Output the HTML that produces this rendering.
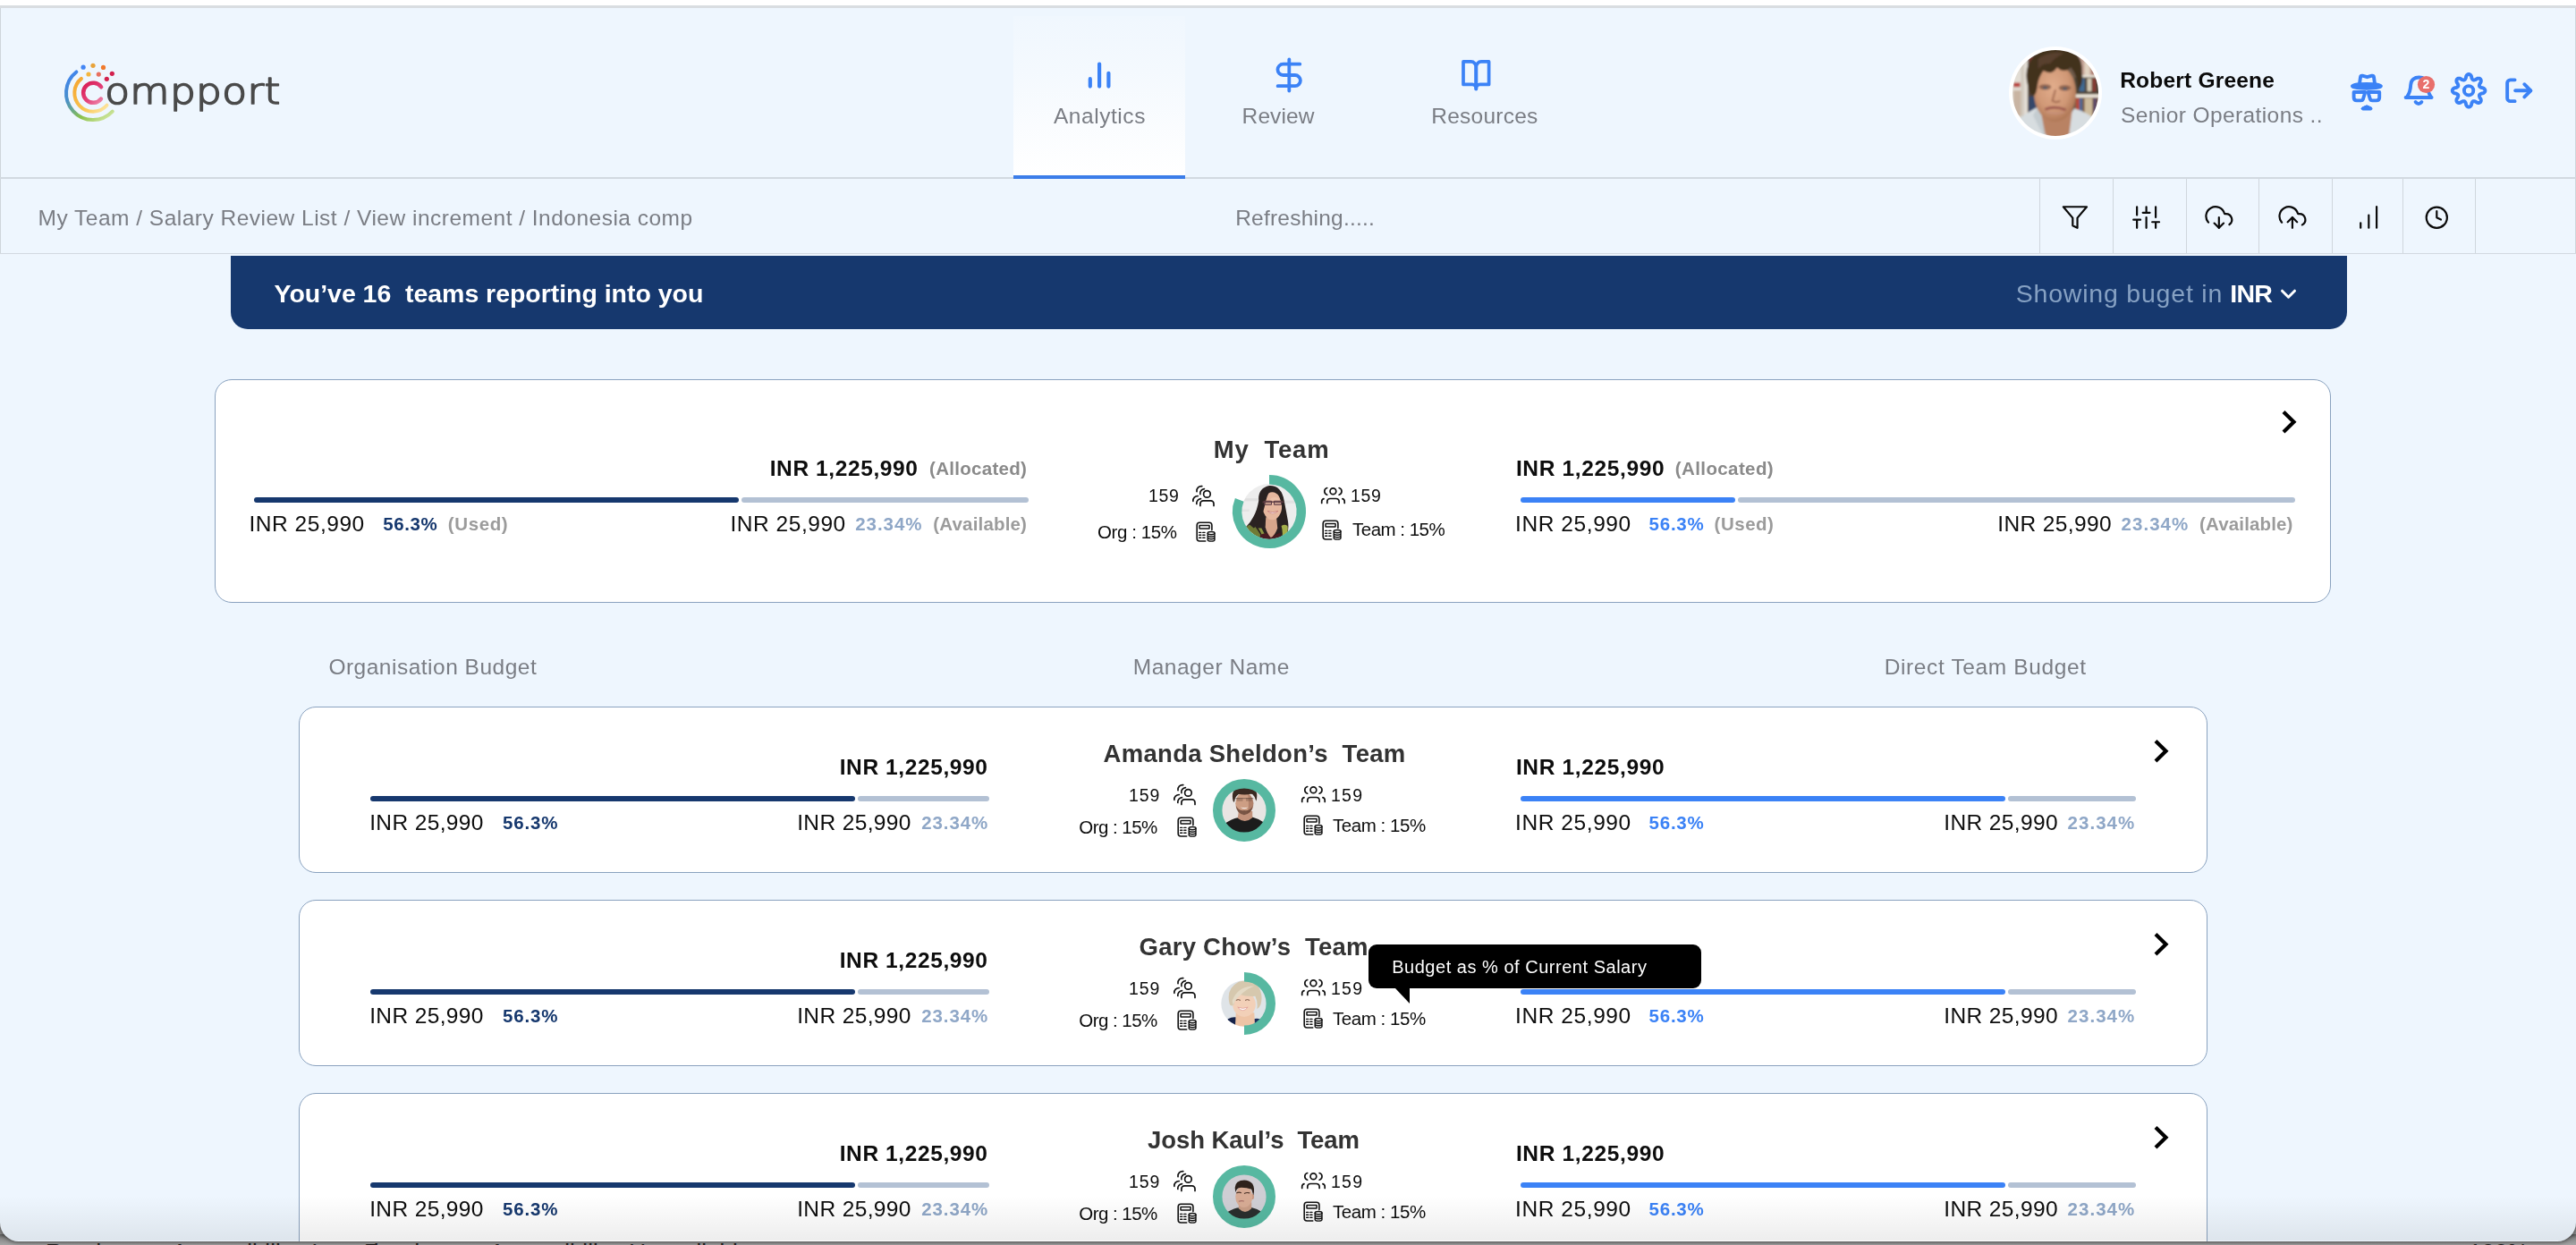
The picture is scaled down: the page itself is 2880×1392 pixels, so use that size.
<!DOCTYPE html>
<html lang="en">
<head>
<meta charset="utf-8">
<title>Compport – Salary Review – Indonesia comp</title>
<style>
html,body{margin:0;padding:0;}
body{width:2880px;height:1392px;overflow:hidden;background:#8d8d8d;font-family:"Liberation Sans",Arial,sans-serif;}
#desk{position:absolute;left:0;top:1380px;width:2880px;height:12px;background:linear-gradient(#5a5a5a,#8a8a8a 40%,#a6a6a6);overflow:hidden;}
#desk span{position:absolute;top:7px;font-size:26px;line-height:26px;color:#222;white-space:nowrap;}
#win{will-change:transform;position:absolute;left:0;top:0;width:2880px;height:1388px;background:#eef6fe;border-radius:0 0 21px 21px;overflow:hidden;box-shadow:0 1px 5px rgba(0,0,0,.55);}
.abs{position:absolute;}
.tx{position:absolute;white-space:pre;margin:0;padding:0;}
#chrome-top{position:absolute;left:0;top:0;width:2880px;height:6px;background:#fff;}
#chrome-line{position:absolute;left:0;top:6px;width:2880px;height:3px;background:#d9dde1;}
#edge-l{position:absolute;left:0;top:9px;width:1px;height:274px;background:#cfd5db;}
#edge-r{position:absolute;left:2879px;top:9px;width:1px;height:274px;background:#cfd5db;}
#hdr-border{position:absolute;left:0;top:198px;width:2880px;height:2px;background:#d2d9e0;}
#sub-border{position:absolute;left:0;top:283px;width:2880px;height:1px;background:#d2d9e0;}
#tab-active{position:absolute;left:1133px;top:18px;width:192px;height:178px;background:linear-gradient(180deg,#f0f7fe 0%,#f4f9fe 35%,#ffffff 100%);}
#tab-line{position:absolute;left:1133px;top:196px;width:192px;height:4px;background:#3b7de9;}
.vdiv{position:absolute;top:200px;width:1px;height:83px;background:#cfd6dd;}
#banner{position:absolute;left:258px;top:286px;width:2366px;height:82px;background:#16386e;border-radius:0 0 19px 19px;}
.card{position:absolute;background:#fff;border:1px solid #8aa2bf;border-radius:19px;box-sizing:border-box;}
.bar{position:absolute;height:6px;border-radius:3px;}
.bar.dark{background:#16386e;}
.bar.blue{background:#3b82f6;}
.bar.light{background:#b3c1d4;}
#tip{position:absolute;left:1530px;top:1056px;width:372px;height:49px;background:#000;border-radius:9px;}
#tip-arrow{position:absolute;left:1560px;top:1105px;width:0;height:0;border-top:17px solid #000;border-left:16px solid transparent;}
#fade{position:absolute;left:0;top:1337px;width:2880px;height:50px;background:linear-gradient(rgba(0,0,0,0),rgba(0,0,0,.07));pointer-events:none;}
svg{position:absolute;overflow:visible;}
</style>
</head>
<body>
<div id="desk"><span style="left:51px">Ready</span><span style="left:160px">&#9786; Accessibility: Investigate</span><span style="left:407px">Ready</span><span style="left:515px">&#9786; Accessibility: Unavailable</span><span style="left:2230px">&#9635; &#9636;</span><span style="left:2760px">100%</span></div>
<div id="win">
<div id="chrome-top"></div><div id="chrome-line"></div><div id="edge-l"></div><div id="edge-r"></div>
<header>
<div id="tab-active"></div>
<svg style="left:0px;top:0px" width="340" height="200" viewBox="0 0 340 200" ><title>compport</title><defs><linearGradient id="lg1" gradientUnits="userSpaceOnUse" x1="80" y1="78" x2="122" y2="134"><stop offset="0" stop-color="#3f83f1"/><stop offset=".35" stop-color="#4a90c8"/><stop offset=".7" stop-color="#8bc24a"/><stop offset="1" stop-color="#d6e9a6"/></linearGradient><linearGradient id="lg2" gradientUnits="userSpaceOnUse" x1="84" y1="90" x2="120" y2="122"><stop offset="0" stop-color="#f5a733"/><stop offset=".6" stop-color="#f9c652"/><stop offset="1" stop-color="#fde6a4"/></linearGradient><linearGradient id="lg3" gradientUnits="userSpaceOnUse" x1="94" y1="92" x2="114" y2="116"><stop offset="0" stop-color="#d81b55"/><stop offset=".6" stop-color="#e4457c"/><stop offset="1" stop-color="#f08fb0"/></linearGradient></defs><path d="M85.37,80.49 A30,30 0 1 0 125.80,124.61" fill="none" stroke="url(#lg1)" stroke-width="4" stroke-linecap="round"/><path d="M90.97,87.91 A20.7,20.7 0 1 0 119.50,117.72" fill="none" stroke="url(#lg2)" stroke-width="4" stroke-linecap="round"/><path d="M113.14,97.30 A11.05,11.05 0 1 0 112.94,110.56" fill="none" stroke="url(#lg3)" stroke-width="4.5" stroke-linecap="round"/><circle cx="93.1" cy="75.2" r="2.6" fill="#4285f4"/><circle cx="104" cy="73.3" r="2.6" fill="#e8a33a"/><circle cx="115.5" cy="75.4" r="2.6" fill="#f07a2c"/><circle cx="99" cy="83" r="2.6" fill="#f4b63e"/><circle cx="110.3" cy="83.1" r="2.6" fill="#e8705f"/><circle cx="125.3" cy="82.3" r="2.6" fill="#d2214e"/><circle cx="119.3" cy="88.3" r="2.6" fill="#d2214e"/><text transform="translate(117.2,116.2) scale(1.12,1)" x="0" y="0" font-family="'DejaVu Sans Light','DejaVu Sans','Liberation Sans',sans-serif" font-weight="200" font-size="40.5" fill="#4a4a4a" stroke="#4a4a4a" stroke-width="1.7" stroke-linejoin="round" stroke-linecap="round" textLength="175" lengthAdjust="spacing">ompport</text></svg>
<svg style="left:1200px;top:50px" width="500" height="70" viewBox="1200 50 500 70" ><g fill="none" stroke="#3b82f6" stroke-linecap="round" stroke-linejoin="round"><path stroke-width="4.2" d="M1218.8,88.2V96.6M1229.1,71.6V96.6M1239.4,81.8V96.6"/><path stroke-width="3.8" d="M1441.3,66.5V101.5"/><path stroke-width="3.8" d="M1453.3,71.7H1434.6a6.15,6.15 0 0 0 0,12.3h13.2a6.1,6.1 0 0 1 0,12.2H1428.6"/><path stroke-width="3.7" d="M1636,68.9H1644.6a5.7,6.3 0 0 1 5.7,6.3V99.4a4.3,5 0 0 0-4.3,-5H1636Z"/><path stroke-width="3.7" d="M1664.6,68.9H1656a5.7,6.3 0 0 0-5.7,6.3V99.4a4.3,5 0 0 1 4.3,-5H1664.6Z"/></g></svg>
<div class="abs" style="left:2246px;top:52px;width:104px;height:104px;border-radius:50%;background:#fff;"></div>
<svg style="left:2246px;top:52px" width="104" height="104" viewBox="0 0 104 104" ><defs><clipPath id="c1"><circle cx="52" cy="52" r="48"/></clipPath><filter id="b1" x="-20%" y="-20%" width="140%" height="140%"><feGaussianBlur stdDeviation="0.885"/></filter></defs><g clip-path="url(#c1)"><g filter="url(#b1)" transform="translate(4,4) scale(0.96)"><defs><radialGradient id="rgf" cx="0.45" cy="0.4" r="0.65"><stop offset="0" stop-color="#e2ad8c"/><stop offset=".6" stop-color="#d09876"/><stop offset="1" stop-color="#a8704f"/></radialGradient></defs><rect x="-10" y="-10" width="120" height="120" fill="#6e5a4a"/><rect x="-10" y="-10" width="28" height="120" fill="#e2ddd4"/><rect x="1" y="38" width="8" height="5" fill="#b8423c"/><rect x="1" y="47" width="9" height="30" fill="#c9b4a2"/><rect x="10" y="-10" width="3" height="120" fill="#cfc8bc"/><rect x="18" y="-10" width="10" height="120" fill="#4e4038"/><rect x="19" y="54" width="9" height="28" fill="#34466a"/><rect x="19" y="8" width="8" height="30" fill="#7a3a30"/><rect x="76" y="6" width="36" height="23" fill="#c7a698"/><rect x="84" y="6" width="6" height="23" fill="#e2d4c2"/><rect x="92" y="6" width="5" height="23" fill="#a8746a"/><rect x="79" y="29" width="33" height="3" fill="#ece6da"/><rect x="72" y="32" width="40" height="19" fill="#4e4438"/><rect x="78" y="33" width="6" height="15" fill="#3f6a94"/><rect x="87" y="33" width="5" height="15" fill="#d8cdb8"/><rect x="93" y="33" width="4" height="15" fill="#8a3a30"/><rect x="72" y="51.5" width="40" height="4" fill="#ece6da"/><rect x="72" y="55.5" width="40" height="26" fill="#7e5e48"/><rect x="74" y="56" width="4" height="24" fill="#b84a3a"/><rect x="78" y="56" width="3" height="24" fill="#3a6aa0"/><rect x="84" y="56" width="9" height="24" fill="#cdbb9c"/><rect x="94" y="56" width="4" height="24" fill="#5a4a6a"/><path d="M2,84 Q18,72 30,66 L42,86 L60,86 L72,68 Q86,72 98,82 L104,112 L-4,112Z" fill="#d7dde0"/><path d="M30,66 L42,86 L36,100 L24,76Z" fill="#c4ccd0"/><path d="M32,66 L70,66 L66,98 Q52,110 38,98Z" fill="#b98264"/><ellipse cx="49.5" cy="50" rx="24.5" ry="33.5" fill="url(#rgf)"/><ellipse cx="38" cy="43" rx="7" ry="3.2" fill="#7a5240" opacity=".75"/><ellipse cx="61" cy="44" rx="7" ry="3.2" fill="#7a5240" opacity=".75"/><ellipse cx="38" cy="44" rx="2.6" ry="1.6" fill="#4a5a6a"/><ellipse cx="61" cy="45" rx="2.6" ry="1.6" fill="#4a5a6a"/><path d="M50,46 L46.5,59 q4.5,3 9,0" stroke="#9a624a" stroke-width="2.2" fill="none" opacity=".8"/><path d="M38,69 q11,-4.5 24,0.5" stroke="#9a544e" stroke-width="2.8" fill="none"/><path d="M40,72 q10,3 20,0.5" stroke="#c89280" stroke-width="2" fill="none" opacity=".8"/><path d="M21,50 Q10,24 24,8 Q40,-8 62,-2 Q82,2 81,26 Q83,40 76,47 Q77,32 68,20 Q60,28 52,20 Q46,30 36,24 Q30,32 29,42 Q28,50 26,52 Q23,54 21,50Z" fill="#43301f"/><path d="M30,10 Q44,0 60,4 Q50,8 44,16 Q36,14 30,22Z" fill="#5c4430" opacity=".9"/></g></g></svg>
<svg style="left:2620px;top:60px" width="240" height="80" viewBox="0 0 240 80" ><g fill="none" stroke="#3b82f6" stroke-width="3.9" stroke-linecap="round" stroke-linejoin="round"><ellipse cx="25.9" cy="36.3" rx="16" ry="2.4" fill="#3b82f6"/><path d="M18,33.5 L19,26.2 Q19.3,24.2 21.2,24.7 L26.5,26.2 L31.8,24.7 Q33.7,24.2 34,26.2 L35,33.5"/><path d="M11.6,43 L24.3,43 L21.9,51 Q21.3,52.4 19.6,52.4 L15,52.4 Q11.6,52.4 11.6,49 Z"/><path d="M40.2,43 L27.5,43 L29.9,51 Q30.5,52.4 32.2,52.4 L36.8,52.4 Q40.2,52.4 40.2,49 Z"/><path d="M20.2,61.6 Q20.2,59.6 22.6,59.3 Q26.1,56.4 29.6,59.3 Q32,59.6 32,61.6 Q32,63 30.5,63 H21.7 Q20.2,63 20.2,61.6 Z" fill="#3b82f6" stroke-width="1"/><path d="M69.6,49 H98.6"/><path d="M71.2,48 C74,44 75,40 75.2,35 C75.5,29 79.5,26.5 84.5,26.5 C89.5,26.5 93.5,29 93.8,35 C94,40 95,44 97.6,48"/><path d="M80.6,54 Q84,58.2 87.4,54"/><path d="M191.6,29.35 H186.65 a3.5,3.5 0 0 0 -3.5,3.5 V49.65 a3.5,3.5 0 0 0 3.5,3.5 H191.6"/><path d="M192.2,41.3 H209"/><path d="M202.3,34.2 L209.4,41.3 L202.3,48.4"/><circle cx="140.1" cy="41.3" r="5.2"/><path d="M158.40,41.30 L158.38,41.62 L158.32,41.94 L158.21,42.25 L158.06,42.56 L157.87,42.85 L157.64,43.14 L157.37,43.42 L157.05,43.68 L156.68,43.93 L156.24,44.15 L155.67,44.33 L154.82,44.43 L154.33,44.58 L153.92,44.75 L153.56,44.91 L153.25,45.07 L152.97,45.23 L152.72,45.40 L152.51,45.57 L152.33,45.75 L152.18,45.94 L152.06,46.13 L151.98,46.34 L151.92,46.56 L151.90,46.80 L151.90,47.05 L151.93,47.33 L151.98,47.62 L152.06,47.93 L152.17,48.27 L152.31,48.64 L152.48,49.04 L152.72,49.49 L153.25,50.17 L153.53,50.70 L153.68,51.17 L153.77,51.60 L153.81,52.01 L153.81,52.40 L153.77,52.77 L153.69,53.11 L153.58,53.43 L153.43,53.73 L153.25,54.00 L153.04,54.24 L152.80,54.45 L152.53,54.63 L152.23,54.78 L151.91,54.89 L151.57,54.97 L151.20,55.01 L150.81,55.01 L150.40,54.97 L149.97,54.88 L149.50,54.73 L148.97,54.45 L148.29,53.92 L147.84,53.68 L147.44,53.51 L147.07,53.37 L146.73,53.26 L146.42,53.18 L146.13,53.13 L145.85,53.10 L145.60,53.10 L145.36,53.12 L145.14,53.18 L144.93,53.26 L144.74,53.38 L144.55,53.53 L144.37,53.71 L144.20,53.92 L144.03,54.17 L143.87,54.45 L143.71,54.76 L143.55,55.12 L143.38,55.53 L143.23,56.02 L143.13,56.87 L142.95,57.44 L142.73,57.88 L142.48,58.25 L142.22,58.57 L141.94,58.84 L141.65,59.07 L141.36,59.26 L141.05,59.41 L140.74,59.52 L140.42,59.58 L140.10,59.60 L139.78,59.58 L139.46,59.52 L139.15,59.41 L138.84,59.26 L138.55,59.07 L138.26,58.84 L137.98,58.57 L137.72,58.25 L137.47,57.88 L137.25,57.44 L137.07,56.87 L136.97,56.02 L136.82,55.53 L136.65,55.12 L136.49,54.76 L136.33,54.45 L136.17,54.17 L136.00,53.92 L135.83,53.71 L135.65,53.53 L135.46,53.38 L135.27,53.26 L135.06,53.18 L134.84,53.12 L134.60,53.10 L134.35,53.10 L134.07,53.13 L133.78,53.18 L133.47,53.26 L133.13,53.37 L132.76,53.51 L132.36,53.68 L131.91,53.92 L131.23,54.45 L130.70,54.73 L130.23,54.88 L129.80,54.97 L129.39,55.01 L129.00,55.01 L128.63,54.97 L128.29,54.89 L127.97,54.78 L127.67,54.63 L127.40,54.45 L127.16,54.24 L126.95,54.00 L126.77,53.73 L126.62,53.43 L126.51,53.11 L126.43,52.77 L126.39,52.40 L126.39,52.01 L126.43,51.60 L126.52,51.17 L126.67,50.70 L126.95,50.17 L127.48,49.49 L127.72,49.04 L127.89,48.64 L128.03,48.27 L128.14,47.93 L128.22,47.62 L128.27,47.33 L128.30,47.05 L128.30,46.80 L128.28,46.56 L128.22,46.34 L128.14,46.13 L128.02,45.94 L127.87,45.75 L127.69,45.57 L127.48,45.40 L127.23,45.23 L126.95,45.07 L126.64,44.91 L126.28,44.75 L125.87,44.58 L125.38,44.43 L124.53,44.33 L123.96,44.15 L123.52,43.93 L123.15,43.68 L122.83,43.42 L122.56,43.14 L122.33,42.85 L122.14,42.56 L121.99,42.25 L121.88,41.94 L121.82,41.62 L121.80,41.30 L121.82,40.98 L121.88,40.66 L121.99,40.35 L122.14,40.04 L122.33,39.75 L122.56,39.46 L122.83,39.18 L123.15,38.92 L123.52,38.67 L123.96,38.45 L124.53,38.27 L125.38,38.17 L125.87,38.02 L126.28,37.85 L126.64,37.69 L126.95,37.53 L127.23,37.37 L127.48,37.20 L127.69,37.03 L127.87,36.85 L128.02,36.66 L128.14,36.47 L128.22,36.26 L128.28,36.04 L128.30,35.80 L128.30,35.55 L128.27,35.27 L128.22,34.98 L128.14,34.67 L128.03,34.33 L127.89,33.96 L127.72,33.56 L127.48,33.11 L126.95,32.43 L126.67,31.90 L126.52,31.43 L126.43,31.00 L126.39,30.59 L126.39,30.20 L126.43,29.83 L126.51,29.49 L126.62,29.17 L126.77,28.87 L126.95,28.60 L127.16,28.36 L127.40,28.15 L127.67,27.97 L127.97,27.82 L128.29,27.71 L128.63,27.63 L129.00,27.59 L129.39,27.59 L129.80,27.63 L130.23,27.72 L130.70,27.87 L131.23,28.15 L131.91,28.68 L132.36,28.92 L132.76,29.09 L133.13,29.23 L133.47,29.34 L133.78,29.42 L134.07,29.47 L134.35,29.50 L134.60,29.50 L134.84,29.48 L135.06,29.42 L135.27,29.34 L135.46,29.22 L135.65,29.07 L135.83,28.89 L136.00,28.68 L136.17,28.43 L136.33,28.15 L136.49,27.84 L136.65,27.48 L136.82,27.07 L136.97,26.58 L137.07,25.73 L137.25,25.16 L137.47,24.72 L137.72,24.35 L137.98,24.03 L138.26,23.76 L138.55,23.53 L138.84,23.34 L139.15,23.19 L139.46,23.08 L139.78,23.02 L140.10,23.00 L140.42,23.02 L140.74,23.08 L141.05,23.19 L141.36,23.34 L141.65,23.53 L141.94,23.76 L142.22,24.03 L142.48,24.35 L142.73,24.72 L142.95,25.16 L143.13,25.73 L143.23,26.58 L143.38,27.07 L143.55,27.48 L143.71,27.84 L143.87,28.15 L144.03,28.43 L144.20,28.68 L144.37,28.89 L144.55,29.07 L144.74,29.22 L144.93,29.34 L145.14,29.42 L145.36,29.48 L145.60,29.50 L145.85,29.50 L146.13,29.47 L146.42,29.42 L146.73,29.34 L147.07,29.23 L147.44,29.09 L147.84,28.92 L148.29,28.68 L148.97,28.15 L149.50,27.87 L149.97,27.72 L150.40,27.63 L150.81,27.59 L151.20,27.59 L151.57,27.63 L151.91,27.71 L152.23,27.82 L152.53,27.97 L152.80,28.15 L153.04,28.36 L153.25,28.60 L153.43,28.87 L153.58,29.17 L153.69,29.49 L153.77,29.83 L153.81,30.20 L153.81,30.59 L153.77,31.00 L153.68,31.43 L153.53,31.90 L153.25,32.43 L152.72,33.11 L152.48,33.56 L152.31,33.96 L152.17,34.33 L152.06,34.67 L151.98,34.98 L151.93,35.27 L151.90,35.55 L151.90,35.80 L151.92,36.04 L151.98,36.26 L152.06,36.47 L152.18,36.66 L152.33,36.85 L152.51,37.03 L152.72,37.20 L152.97,37.37 L153.25,37.53 L153.56,37.69 L153.92,37.85 L154.33,38.02 L154.82,38.17 L155.67,38.27 L156.24,38.45 L156.68,38.67 L157.05,38.92 L157.37,39.18 L157.64,39.46 L157.87,39.75 L158.06,40.04 L158.21,40.35 L158.32,40.66 L158.38,40.98Z"/></g><circle cx="92.5" cy="34.5" r="9.6" fill="#e86f6c"/><text x="92.5" y="39.4" text-anchor="middle" font-family="'Liberation Sans',sans-serif" font-weight="700" font-size="14" fill="#fff">2</text></svg>
<span class="tx" id="t0" style="left:1177.90px;top:113.82px;font-size:24.5px;line-height:31px;letter-spacing:0.562px;color:#7a7d84;">Analytics</span>
<span class="tx" id="t1" style="left:1388.60px;top:113.82px;font-size:24.5px;line-height:31px;letter-spacing:0.100px;color:#7a7d84;">Review</span>
<span class="tx" id="t2" style="left:1600.20px;top:113.82px;font-size:24.5px;line-height:31px;letter-spacing:0.259px;color:#7a7d84;">Resources</span>
<span class="tx" id="t3" style="left:2370.20px;top:73.72px;font-size:24.5px;line-height:31px;letter-spacing:0.206px;color:#0b0b0b;font-weight:700;">Robert Greene</span>
<span class="tx" id="t4" style="left:2371.10px;top:113.32px;font-size:24.5px;line-height:31px;letter-spacing:0.396px;color:#7a7d84;">Senior Operations ..</span>
<div id="hdr-border"></div>
<div id="tab-line"></div>
</header>
<nav>
<div class="vdiv" style="left:2280px"></div>
<div class="vdiv" style="left:2362px"></div>
<div class="vdiv" style="left:2444px"></div>
<div class="vdiv" style="left:2525px"></div>
<div class="vdiv" style="left:2607px"></div>
<div class="vdiv" style="left:2686px"></div>
<div class="vdiv" style="left:2767px"></div>
<svg style="left:2290px;top:220px" width="460" height="46" viewBox="2290 220 460 46" ><g transform="translate(2304.2,227.3) scale(1.31)" fill="none" stroke="#0a0a0a" stroke-width="1.679" stroke-linecap="round" stroke-linejoin="round"><polygon points="22 3 2 3 10 12.46 10 19 14 21 14 12.46 22 3"/></g><g transform="translate(2383.9,227.3) scale(1.31)" fill="none" stroke="#0a0a0a" stroke-width="1.679" stroke-linecap="round" stroke-linejoin="round"><path d="M4,21V14M4,10V3M12,21V12M12,8V3M20,21V16M20,12V3M1,14H7M9,8H15M17,16H23"/></g><g transform="translate(2465.1,227.3) scale(1.31)" fill="none" stroke="#0a0a0a" stroke-width="1.679" stroke-linecap="round" stroke-linejoin="round"><polyline points="8 17 12 21 16 17"/><line x1="12" y1="12" x2="12" y2="21"/><path d="M20.88 18.09A5 5 0 0 0 18 9h-1.26A8 8 0 1 0 3 16.29"/></g><g transform="translate(2547.2,227.3) scale(1.31)" fill="none" stroke="#0a0a0a" stroke-width="1.679" stroke-linecap="round" stroke-linejoin="round"><polyline points="16 16 12 12 8 16"/><line x1="12" y1="12" x2="12" y2="21"/><path d="M20.39 18.39A5 5 0 0 0 18 9h-1.26A8 8 0 1 0 3 16.3"/></g><g fill="none" stroke="#0a0a0a" stroke-width="2.2" stroke-linecap="round"><path d="M2639.2,249.3V254.7M2648.3,240.5V254.7M2657.1,231.2V254.7"/><circle cx="2724.3" cy="243.2" r="11.6"/><path d="M2724.3,236.2V243.2L2729,245.5" stroke-linejoin="round"/></g></svg>
<span class="tx" id="t5" style="left:42.60px;top:228.00px;font-size:24.5px;line-height:31px;letter-spacing:0.489px;color:#7a7d84;">My Team / Salary Review List / View increment / Indonesia comp</span>
<span class="tx" id="t6" style="left:1381.20px;top:228.00px;font-size:24.5px;line-height:31px;letter-spacing:0.221px;color:#7a7d84;">Refreshing.....</span>
<div id="sub-border"></div>
</nav>
<main>
<div id="banner"></div>
<svg style="left:2545px;top:318px" width="28" height="22" viewBox="0 0 28 22" ><path d="M6.5,7.2 L13.5,14.2 L20.5,7.2" fill="none" stroke="#fff" stroke-width="3" stroke-linecap="round" stroke-linejoin="round"/></svg>
<section class="card" style="left:240px;top:424px;width:2366px;height:250px;"></section>
<div class="bar dark" style="left:284.25px;top:556px;width:541.5px"></div><div class="bar light" style="left:828.75px;top:556px;width:321.25px"></div><div class="bar blue" style="left:1700px;top:556px;width:240px"></div><div class="bar light" style="left:1943px;top:556px;width:623.25px"></div>
<svg style="left:1333.25px;top:542px" width="26" height="25" viewBox="0 0 26 25" ><g fill="none" stroke="#111" stroke-width="1.7" stroke-linecap="round" stroke-linejoin="round"><circle cx="16.4" cy="10.4" r="3.8"/><path d="M8.9,23.4 v-2.2 a3.3,3.3 0 0 1 3.3,-3.3 h8.5 a3.3,3.3 0 0 1 3.3,3.3 v2.2"/><path d="M10.8,1.6 C7.5,1.2 4.3,3.8 5,7.7"/><path d="M13.4,4.65 C10.5,5 8,7.5 8.9,10.6"/><path d="M6.3,12.5 C3,12.6 0.6,15 0.85,18.3"/><path d="M9.5,15.7 C6.5,16 4.5,18.5 4.8,21.5"/></g></svg>
<svg style="left:1335.25px;top:580.75px" width="25" height="26" viewBox="0 0 25 26" ><g fill="none" stroke="#111" stroke-linecap="round" stroke-linejoin="round"><path stroke-width="1.6" d="M19.9,11.6 V6.3 a3,3 0 0 0 -3,-3 H6.2 a3,3 0 0 0 -3,3 V20.96 a3,3 0 0 0 3,3 H12.7"/><rect stroke-width="1.5" x="6" y="6.5" width="11.1" height="3.4" rx="0.5"/><path stroke-width="1.4" d="M5.6,14.4h2.2M9.8,14.4h2.2M5.6,17.3h2.2M9.8,17.3h2.2M5.6,20.2h2.2M9.8,20.2h2.2"/><ellipse stroke-width="1.4" cx="19.1" cy="15.1" rx="3.9" ry="1.6"/><path stroke-width="1.4" d="M15.2,15.1 V22.5 a3.9,1.6 0 0 0 7.8,0 V15.1 M15.2,17.6 a3.9,1.6 0 0 0 7.8,0 M15.2,20.1 a3.9,1.6 0 0 0 7.8,0"/></g></svg>
<svg style="left:1473.5px;top:542.4px" width="33" height="22" viewBox="0 0 33 22" ><g fill="none" stroke="#111" stroke-width="1.7" stroke-linecap="round" stroke-linejoin="round"><circle cx="16.4" cy="7.2" r="3.4"/><path d="M9.7,3.5 a4,4 0 0 0 0,7.7"/><path d="M23.1,3.5 a4,4 0 0 1 0,7.7"/><path d="M9.8,20.5 v-1.7 a3.3,3.3 0 0 1 3.3,-3.3 h6.7 a3.3,3.3 0 0 1 3.3,3.3 v1.7"/><path d="M6,15.6 C4.5,16 3.7,17.2 3.7,18.8 V20.5"/><path d="M26.9,15.6 C28.4,16 29.2,17.2 29.2,18.8 V20.5"/></g></svg>
<svg style="left:1476.25px;top:579px" width="25" height="26" viewBox="0 0 25 26" ><g fill="none" stroke="#111" stroke-linecap="round" stroke-linejoin="round"><path stroke-width="1.6" d="M19.9,11.6 V6.3 a3,3 0 0 0 -3,-3 H6.2 a3,3 0 0 0 -3,3 V20.96 a3,3 0 0 0 3,3 H12.7"/><rect stroke-width="1.5" x="6" y="6.5" width="11.1" height="3.4" rx="0.5"/><path stroke-width="1.4" d="M5.6,14.4h2.2M9.8,14.4h2.2M5.6,17.3h2.2M9.8,17.3h2.2M5.6,20.2h2.2M9.8,20.2h2.2"/><ellipse stroke-width="1.4" cx="19.1" cy="15.1" rx="3.9" ry="1.6"/><path stroke-width="1.4" d="M15.2,15.1 V22.5 a3.9,1.6 0 0 0 7.8,0 V15.1 M15.2,17.6 a3.9,1.6 0 0 0 7.8,0 M15.2,20.1 a3.9,1.6 0 0 0 7.8,0"/></g></svg>
<svg style="left:1376.1px;top:529.0px" width="86" height="86" viewBox="0 0 86 86" ><defs><clipPath id="c2"><circle cx="43.0" cy="43.0" r="30.9"/></clipPath><filter id="b2" x="-20%" y="-20%" width="140%" height="140%"><feGaussianBlur stdDeviation="0.485"/></filter></defs><g clip-path="url(#c2)"><g filter="url(#b2)" transform="translate(12.100000000000001,12.100000000000001) scale(0.618)"><rect x="-10" y="-10" width="120" height="120" fill="#ededed"/><rect x="-10" y="26" width="40" height="5" fill="#e0e0e0"/><rect x="74" y="30" width="40" height="5" fill="#e2e2e2"/><rect x="-10" y="46" width="24" height="4" fill="#e3e3e3"/><path d="M31,30 Q29,8 50,3 Q72,2 77,30 Q81,50 84,68 Q86,82 82,92 L72,102 L18,102 L6,80 Q16,70 21,60 Q28,48 31,30Z" fill="#2b2220"/><path d="M7,79 Q14,72 22,74 Q30,84 40,102 L18,104 Z" fill="#6f7a36"/><path d="M30,80 Q36,88 40,102 L46,102 Q42,90 36,80Z" fill="#8a9440"/><path d="M72,76 Q78,72 83,76 Q85,86 80,94 L72,102 Q76,90 72,76Z" fill="#a4ae4c"/><path d="M34,92 Q46,86 56,94 L70,88 L74,106 L30,106Z" fill="#4a1a20"/><path d="M44,60 L63,60 L65,80 Q60,94 53,97 Q46,90 43,78Z" fill="#d7a68c"/><ellipse cx="55.5" cy="40" rx="17.5" ry="25" fill="#e6b79e"/><ellipse cx="60" cy="30" rx="9" ry="6" fill="#efc6ae" opacity=".7"/><path d="M38,34 Q38,12 56,7 Q48,14 44,30 Q40,50 34,64 Q28,76 22,80 L15,74 Q30,56 38,34Z" fill="#2b2220"/><path d="M68,16 Q79,30 78,60 L73,48 Q74,32 64,14Z" fill="#2b2220"/><path d="M38,32.5 H77" stroke="#5a3a40" stroke-width="2.2"/><path d="M41,31 h13 v6.5 h-13z M59,31 h13 v6.5 h-13z" fill="#7a5a60" fill-opacity=".25" stroke="#5a3a44" stroke-width="1.6"/><path d="M47,49 Q56,58 66,49 Q56,53 47,49Z" fill="#fff" stroke="#c47472" stroke-width="1.2"/></g></g><path d="M43.0,7.200000000000003 A35.8,35.8 0 1 1 9.71,29.82" fill="none" stroke="#57b8a1" stroke-width="10.4"/></svg>
<svg style="left:2550.5px;top:458.8px" width="18" height="26" viewBox="0 0 18 26" ><path d="M2,1.5 L13.5,12.75 L2,24" fill="none" stroke="#000" stroke-width="4.2" stroke-linejoin="miter" stroke-linecap="butt"/></svg>
<section class="card" style="left:334px;top:790px;width:2134px;height:186px;"></section>
<div class="bar dark" style="left:414.25px;top:890px;width:541.5px"></div><div class="bar light" style="left:958.75px;top:890px;width:147.5px"></div><div class="bar blue" style="left:1700px;top:890px;width:542px"></div><div class="bar light" style="left:2245px;top:890px;width:143px"></div>
<svg style="left:1312px;top:876px" width="26" height="25" viewBox="0 0 26 25" ><g fill="none" stroke="#111" stroke-width="1.7" stroke-linecap="round" stroke-linejoin="round"><circle cx="16.4" cy="10.4" r="3.8"/><path d="M8.9,23.4 v-2.2 a3.3,3.3 0 0 1 3.3,-3.3 h8.5 a3.3,3.3 0 0 1 3.3,3.3 v2.2"/><path d="M10.8,1.6 C7.5,1.2 4.3,3.8 5,7.7"/><path d="M13.4,4.65 C10.5,5 8,7.5 8.9,10.6"/><path d="M6.3,12.5 C3,12.6 0.6,15 0.85,18.3"/><path d="M9.5,15.7 C6.5,16 4.5,18.5 4.8,21.5"/></g></svg>
<svg style="left:1314px;top:911px" width="25" height="26" viewBox="0 0 25 26" ><g fill="none" stroke="#111" stroke-linecap="round" stroke-linejoin="round"><path stroke-width="1.6" d="M19.9,11.6 V6.3 a3,3 0 0 0 -3,-3 H6.2 a3,3 0 0 0 -3,3 V20.96 a3,3 0 0 0 3,3 H12.7"/><rect stroke-width="1.5" x="6" y="6.5" width="11.1" height="3.4" rx="0.5"/><path stroke-width="1.4" d="M5.6,14.4h2.2M9.8,14.4h2.2M5.6,17.3h2.2M9.8,17.3h2.2M5.6,20.2h2.2M9.8,20.2h2.2"/><ellipse stroke-width="1.4" cx="19.1" cy="15.1" rx="3.9" ry="1.6"/><path stroke-width="1.4" d="M15.2,15.1 V22.5 a3.9,1.6 0 0 0 7.8,0 V15.1 M15.2,17.6 a3.9,1.6 0 0 0 7.8,0 M15.2,20.1 a3.9,1.6 0 0 0 7.8,0"/></g></svg>
<svg style="left:1452px;top:876px" width="33" height="22" viewBox="0 0 33 22" ><g fill="none" stroke="#111" stroke-width="1.7" stroke-linecap="round" stroke-linejoin="round"><circle cx="16.4" cy="7.2" r="3.4"/><path d="M9.7,3.5 a4,4 0 0 0 0,7.7"/><path d="M23.1,3.5 a4,4 0 0 1 0,7.7"/><path d="M9.8,20.5 v-1.7 a3.3,3.3 0 0 1 3.3,-3.3 h6.7 a3.3,3.3 0 0 1 3.3,3.3 v1.7"/><path d="M6,15.6 C4.5,16 3.7,17.2 3.7,18.8 V20.5"/><path d="M26.9,15.6 C28.4,16 29.2,17.2 29.2,18.8 V20.5"/></g></svg>
<svg style="left:1455.25px;top:909px" width="25" height="26" viewBox="0 0 25 26" ><g fill="none" stroke="#111" stroke-linecap="round" stroke-linejoin="round"><path stroke-width="1.6" d="M19.9,11.6 V6.3 a3,3 0 0 0 -3,-3 H6.2 a3,3 0 0 0 -3,3 V20.96 a3,3 0 0 0 3,3 H12.7"/><rect stroke-width="1.5" x="6" y="6.5" width="11.1" height="3.4" rx="0.5"/><path stroke-width="1.4" d="M5.6,14.4h2.2M9.8,14.4h2.2M5.6,17.3h2.2M9.8,17.3h2.2M5.6,20.2h2.2M9.8,20.2h2.2"/><ellipse stroke-width="1.4" cx="19.1" cy="15.1" rx="3.9" ry="1.6"/><path stroke-width="1.4" d="M15.2,15.1 V22.5 a3.9,1.6 0 0 0 7.8,0 V15.1 M15.2,17.6 a3.9,1.6 0 0 0 7.8,0 M15.2,20.1 a3.9,1.6 0 0 0 7.8,0"/></g></svg>
<svg style="left:1354.2px;top:868.8px" width="74" height="74" viewBox="0 0 74 74" ><defs><clipPath id="c3"><circle cx="37.0" cy="37.0" r="25.7"/></clipPath><filter id="b3" x="-20%" y="-20%" width="140%" height="140%"><feGaussianBlur stdDeviation="0.584"/></filter></defs><g clip-path="url(#c3)"><g filter="url(#b3)" transform="translate(11.3,11.3) scale(0.514)"><rect x="-10" y="-10" width="120" height="120" fill="#e9e5e3"/><path d="M6,80 Q24,68 36,66 Q50,78 66,64 Q82,68 96,78 L102,112 L-2,112Z" fill="#1f1c1b"/><path d="M38,52 L68,52 L68,66 Q52,80 36,67Z" fill="#c2917a"/><ellipse cx="50.5" cy="35" rx="19.5" ry="24" fill="#cd9e84"/><path d="M58,14 Q72,22 70,40 Q68,54 56,58 Q62,44 58,14Z" fill="#9a6a55" opacity=".55"/><path d="M32,40 Q34,58 50,60 Q66,58 69,40 Q64,52 50,50 Q38,52 32,40Z" fill="#6a4838" opacity=".85"/><path d="M42,43 Q50,50 59,43 Q50,46 42,43Z" fill="#fff"/><path d="M26,30 Q20,6 38,0 Q54,-6 68,1 Q82,8 76,30 Q74,20 68,15 Q52,11 38,15 Q30,20 29,30 Q28,34 26,30Z" fill="#3a2a20"/><ellipse cx="51" cy="8" rx="21" ry="8" fill="#3a2a20"/><path d="M31,24 H70" stroke="#5a463c" stroke-width="1.5" opacity=".8"/><path d="M34,23 h13 v7 h-13z M54,23 h13 v7 h-13z" fill="#6b4a3c" opacity=".35"/></g></g><circle cx="37.0" cy="37.0" r="29.8" fill="none" stroke="#57b8a1" stroke-width="10.4"/></svg>
<svg style="left:2408.4px;top:826.6px" width="18" height="26" viewBox="0 0 18 26" ><path d="M2,1.5 L13.5,12.75 L2,24" fill="none" stroke="#000" stroke-width="4.2" stroke-linejoin="miter" stroke-linecap="butt"/></svg>
<section class="card" style="left:334px;top:1006px;width:2134px;height:186px;"></section>
<div class="bar dark" style="left:414.25px;top:1106px;width:541.5px"></div><div class="bar light" style="left:958.75px;top:1106px;width:147.5px"></div><div class="bar blue" style="left:1700px;top:1106px;width:542px"></div><div class="bar light" style="left:2245px;top:1106px;width:143px"></div>
<svg style="left:1312px;top:1092px" width="26" height="25" viewBox="0 0 26 25" ><g fill="none" stroke="#111" stroke-width="1.7" stroke-linecap="round" stroke-linejoin="round"><circle cx="16.4" cy="10.4" r="3.8"/><path d="M8.9,23.4 v-2.2 a3.3,3.3 0 0 1 3.3,-3.3 h8.5 a3.3,3.3 0 0 1 3.3,3.3 v2.2"/><path d="M10.8,1.6 C7.5,1.2 4.3,3.8 5,7.7"/><path d="M13.4,4.65 C10.5,5 8,7.5 8.9,10.6"/><path d="M6.3,12.5 C3,12.6 0.6,15 0.85,18.3"/><path d="M9.5,15.7 C6.5,16 4.5,18.5 4.8,21.5"/></g></svg>
<svg style="left:1314px;top:1127px" width="25" height="26" viewBox="0 0 25 26" ><g fill="none" stroke="#111" stroke-linecap="round" stroke-linejoin="round"><path stroke-width="1.6" d="M19.9,11.6 V6.3 a3,3 0 0 0 -3,-3 H6.2 a3,3 0 0 0 -3,3 V20.96 a3,3 0 0 0 3,3 H12.7"/><rect stroke-width="1.5" x="6" y="6.5" width="11.1" height="3.4" rx="0.5"/><path stroke-width="1.4" d="M5.6,14.4h2.2M9.8,14.4h2.2M5.6,17.3h2.2M9.8,17.3h2.2M5.6,20.2h2.2M9.8,20.2h2.2"/><ellipse stroke-width="1.4" cx="19.1" cy="15.1" rx="3.9" ry="1.6"/><path stroke-width="1.4" d="M15.2,15.1 V22.5 a3.9,1.6 0 0 0 7.8,0 V15.1 M15.2,17.6 a3.9,1.6 0 0 0 7.8,0 M15.2,20.1 a3.9,1.6 0 0 0 7.8,0"/></g></svg>
<svg style="left:1452px;top:1092px" width="33" height="22" viewBox="0 0 33 22" ><g fill="none" stroke="#111" stroke-width="1.7" stroke-linecap="round" stroke-linejoin="round"><circle cx="16.4" cy="7.2" r="3.4"/><path d="M9.7,3.5 a4,4 0 0 0 0,7.7"/><path d="M23.1,3.5 a4,4 0 0 1 0,7.7"/><path d="M9.8,20.5 v-1.7 a3.3,3.3 0 0 1 3.3,-3.3 h6.7 a3.3,3.3 0 0 1 3.3,3.3 v1.7"/><path d="M6,15.6 C4.5,16 3.7,17.2 3.7,18.8 V20.5"/><path d="M26.9,15.6 C28.4,16 29.2,17.2 29.2,18.8 V20.5"/></g></svg>
<svg style="left:1455.25px;top:1125px" width="25" height="26" viewBox="0 0 25 26" ><g fill="none" stroke="#111" stroke-linecap="round" stroke-linejoin="round"><path stroke-width="1.6" d="M19.9,11.6 V6.3 a3,3 0 0 0 -3,-3 H6.2 a3,3 0 0 0 -3,3 V20.96 a3,3 0 0 0 3,3 H12.7"/><rect stroke-width="1.5" x="6" y="6.5" width="11.1" height="3.4" rx="0.5"/><path stroke-width="1.4" d="M5.6,14.4h2.2M9.8,14.4h2.2M5.6,17.3h2.2M9.8,17.3h2.2M5.6,20.2h2.2M9.8,20.2h2.2"/><ellipse stroke-width="1.4" cx="19.1" cy="15.1" rx="3.9" ry="1.6"/><path stroke-width="1.4" d="M15.2,15.1 V22.5 a3.9,1.6 0 0 0 7.8,0 V15.1 M15.2,17.6 a3.9,1.6 0 0 0 7.8,0 M15.2,20.1 a3.9,1.6 0 0 0 7.8,0"/></g></svg>
<svg style="left:1354.2px;top:1084.8px" width="74" height="74" viewBox="0 0 74 74" ><defs><clipPath id="c4"><circle cx="37.0" cy="37.0" r="25.7"/></clipPath><filter id="b4" x="-20%" y="-20%" width="140%" height="140%"><feGaussianBlur stdDeviation="0.584"/></filter></defs><g clip-path="url(#c4)"><g filter="url(#b4)" transform="translate(11.3,11.3) scale(0.514)"><rect x="-10" y="-10" width="120" height="120" fill="#dfe4e8"/><path d="M14,84 Q24,78 34,80 L34,110 L8,110Z" fill="#16244a"/><path d="M70,84 Q80,80 88,86 L94,110 L70,110Z" fill="#1c2e5c"/><path d="M32,70 L72,70 L74,110 L30,110Z" fill="#eec4a6"/><ellipse cx="50" cy="52" rx="25" ry="27" fill="#f2d0b8"/><path d="M36,58 Q47,72 58,58 Q47,63 36,58Z" fill="#fff" stroke="#d98a86" stroke-width="1.2"/><path d="M32,43 q5,-3 10,0 M52,43 q5,-3 10,0" stroke="#6a4a3a" stroke-width="1.8" fill="none"/><path d="M18,50 Q10,18 38,3 Q64,-5 80,12 Q92,30 86,52 Q84,58 78,62 Q80,46 74,34 Q56,36 40,30 Q30,36 28,52 Q26,56 20,54Z" fill="#d6c8ae"/><path d="M24,44 Q36,12 72,12 Q52,20 42,32 Q32,38 26,54Z" fill="#e4dac6"/></g></g><path d="M37.0,7.199999999999999 A29.8,29.8 0 0 1 37.00,66.80" fill="none" stroke="#57b8a1" stroke-width="10.4"/></svg>
<svg style="left:2408.4px;top:1042.6px" width="18" height="26" viewBox="0 0 18 26" ><path d="M2,1.5 L13.5,12.75 L2,24" fill="none" stroke="#000" stroke-width="4.2" stroke-linejoin="miter" stroke-linecap="butt"/></svg>
<section class="card" style="left:334px;top:1222px;width:2134px;height:186px;"></section>
<div class="bar dark" style="left:414.25px;top:1322px;width:541.5px"></div><div class="bar light" style="left:958.75px;top:1322px;width:147.5px"></div><div class="bar blue" style="left:1700px;top:1322px;width:542px"></div><div class="bar light" style="left:2245px;top:1322px;width:143px"></div>
<svg style="left:1312px;top:1308px" width="26" height="25" viewBox="0 0 26 25" ><g fill="none" stroke="#111" stroke-width="1.7" stroke-linecap="round" stroke-linejoin="round"><circle cx="16.4" cy="10.4" r="3.8"/><path d="M8.9,23.4 v-2.2 a3.3,3.3 0 0 1 3.3,-3.3 h8.5 a3.3,3.3 0 0 1 3.3,3.3 v2.2"/><path d="M10.8,1.6 C7.5,1.2 4.3,3.8 5,7.7"/><path d="M13.4,4.65 C10.5,5 8,7.5 8.9,10.6"/><path d="M6.3,12.5 C3,12.6 0.6,15 0.85,18.3"/><path d="M9.5,15.7 C6.5,16 4.5,18.5 4.8,21.5"/></g></svg>
<svg style="left:1314px;top:1343px" width="25" height="26" viewBox="0 0 25 26" ><g fill="none" stroke="#111" stroke-linecap="round" stroke-linejoin="round"><path stroke-width="1.6" d="M19.9,11.6 V6.3 a3,3 0 0 0 -3,-3 H6.2 a3,3 0 0 0 -3,3 V20.96 a3,3 0 0 0 3,3 H12.7"/><rect stroke-width="1.5" x="6" y="6.5" width="11.1" height="3.4" rx="0.5"/><path stroke-width="1.4" d="M5.6,14.4h2.2M9.8,14.4h2.2M5.6,17.3h2.2M9.8,17.3h2.2M5.6,20.2h2.2M9.8,20.2h2.2"/><ellipse stroke-width="1.4" cx="19.1" cy="15.1" rx="3.9" ry="1.6"/><path stroke-width="1.4" d="M15.2,15.1 V22.5 a3.9,1.6 0 0 0 7.8,0 V15.1 M15.2,17.6 a3.9,1.6 0 0 0 7.8,0 M15.2,20.1 a3.9,1.6 0 0 0 7.8,0"/></g></svg>
<svg style="left:1452px;top:1308px" width="33" height="22" viewBox="0 0 33 22" ><g fill="none" stroke="#111" stroke-width="1.7" stroke-linecap="round" stroke-linejoin="round"><circle cx="16.4" cy="7.2" r="3.4"/><path d="M9.7,3.5 a4,4 0 0 0 0,7.7"/><path d="M23.1,3.5 a4,4 0 0 1 0,7.7"/><path d="M9.8,20.5 v-1.7 a3.3,3.3 0 0 1 3.3,-3.3 h6.7 a3.3,3.3 0 0 1 3.3,3.3 v1.7"/><path d="M6,15.6 C4.5,16 3.7,17.2 3.7,18.8 V20.5"/><path d="M26.9,15.6 C28.4,16 29.2,17.2 29.2,18.8 V20.5"/></g></svg>
<svg style="left:1455.25px;top:1341px" width="25" height="26" viewBox="0 0 25 26" ><g fill="none" stroke="#111" stroke-linecap="round" stroke-linejoin="round"><path stroke-width="1.6" d="M19.9,11.6 V6.3 a3,3 0 0 0 -3,-3 H6.2 a3,3 0 0 0 -3,3 V20.96 a3,3 0 0 0 3,3 H12.7"/><rect stroke-width="1.5" x="6" y="6.5" width="11.1" height="3.4" rx="0.5"/><path stroke-width="1.4" d="M5.6,14.4h2.2M9.8,14.4h2.2M5.6,17.3h2.2M9.8,17.3h2.2M5.6,20.2h2.2M9.8,20.2h2.2"/><ellipse stroke-width="1.4" cx="19.1" cy="15.1" rx="3.9" ry="1.6"/><path stroke-width="1.4" d="M15.2,15.1 V22.5 a3.9,1.6 0 0 0 7.8,0 V15.1 M15.2,17.6 a3.9,1.6 0 0 0 7.8,0 M15.2,20.1 a3.9,1.6 0 0 0 7.8,0"/></g></svg>
<svg style="left:1354.2px;top:1300.8px" width="74" height="74" viewBox="0 0 74 74" ><defs><clipPath id="c5"><circle cx="37.0" cy="37.0" r="25.7"/></clipPath><filter id="b5" x="-20%" y="-20%" width="140%" height="140%"><feGaussianBlur stdDeviation="0.584"/></filter></defs><g clip-path="url(#c5)"><g filter="url(#b5)" transform="translate(11.3,11.3) scale(0.514)"><rect x="-10" y="-10" width="120" height="120" fill="#cfced4"/><path d="M12,84 Q30,74 40,74 Q52,86 64,73 Q78,76 90,84 L98,112 L2,112Z" fill="#2b2e2d"/><path d="M38,62 L66,62 L66,76 Q52,90 38,76Z" fill="#c99d86"/><ellipse cx="68" cy="50" rx="3.5" ry="6" fill="#c9977f"/><ellipse cx="49.5" cy="50" rx="18.5" ry="23.5" fill="#d7ab94"/><path d="M33,42 q6,-3 11,0 M50,43 q6,-3 12,-1" stroke="#4a3228" stroke-width="2.2" fill="none"/><path d="M38,60 q7,-2 12,0" stroke="#a8706a" stroke-width="2" fill="none"/><path d="M31,40 Q26,20 42,15 Q58,11 68,22 Q74,32 70,47 Q68,40 66,34 Q56,30 44,30 Q36,30 33,36 Q32,40 31,40Z" fill="#2e211b"/></g></g><circle cx="37.0" cy="37.0" r="29.8" fill="none" stroke="#57b8a1" stroke-width="10.4"/></svg>
<svg style="left:2408.4px;top:1258.6px" width="18" height="26" viewBox="0 0 18 26" ><path d="M2,1.5 L13.5,12.75 L2,24" fill="none" stroke="#000" stroke-width="4.2" stroke-linejoin="miter" stroke-linecap="butt"/></svg>
<span class="tx" id="t7" style="left:306.60px;top:309.50px;font-size:28.5px;line-height:36px;letter-spacing:-0.035px;color:#ffffff;font-weight:700;">You’ve 16  teams reporting into you</span>
<span class="tx" id="t8" style="left:2253.70px;top:309.50px;font-size:28.5px;line-height:36px;letter-spacing:0.798px;color:#86a1c3;">Showing buget in</span>
<span class="tx" id="t9" style="left:2493.20px;top:309.50px;font-size:28.5px;line-height:36px;letter-spacing:-0.712px;color:#ffffff;font-weight:700;">INR</span>
<span class="tx" id="t10" style="left:860.70px;top:507.75px;font-size:24.5px;line-height:31px;letter-spacing:0.600px;color:#0d0d0d;font-weight:700;">INR 1,225,990</span>
<span class="tx" id="t11" style="left:1039.10px;top:510.96px;font-size:20.5px;line-height:26px;letter-spacing:0.293px;color:#8a8a8a;font-weight:700;">(Allocated)</span>
<span class="tx" id="t12" style="left:278.50px;top:569.75px;font-size:24.5px;line-height:31px;letter-spacing:0.525px;color:#0d0d0d;">INR 25,990</span>
<span class="tx" id="t13" style="left:428.30px;top:572.96px;font-size:20.5px;line-height:26px;letter-spacing:0.569px;color:#16386e;font-weight:700;">56.3%</span>
<span class="tx" id="t14" style="left:500.80px;top:572.96px;font-size:20.5px;line-height:26px;letter-spacing:0.610px;color:#9b9b9b;font-weight:700;">(Used)</span>
<span class="tx" id="t15" style="left:816.50px;top:569.75px;font-size:24.5px;line-height:31px;letter-spacing:0.525px;color:#0d0d0d;">INR 25,990</span>
<span class="tx" id="t16" style="left:956.30px;top:572.96px;font-size:20.5px;line-height:26px;letter-spacing:0.920px;color:#8fa7c7;font-weight:700;">23.34%</span>
<span class="tx" id="t17" style="left:1043.30px;top:572.96px;font-size:20.5px;line-height:26px;letter-spacing:0.172px;color:#9b9b9b;font-weight:700;">(Available)</span>
<span class="tx" id="t18" style="left:1356.80px;top:486.00px;font-size:27.5px;line-height:34px;letter-spacing:0.793px;color:#333333;font-weight:700;">My  Team</span>
<span class="tx" id="t19" style="left:1284.10px;top:542.40px;font-size:19.5px;line-height:24px;letter-spacing:0.650px;color:#0d0d0d;">159</span>
<span class="tx" id="t20" style="left:1227.10px;top:581.82px;font-size:20.5px;line-height:26px;letter-spacing:-0.431px;color:#0d0d0d;">Org : 15%</span>
<span class="tx" id="t21" style="left:1510.10px;top:542.40px;font-size:19.5px;line-height:24px;letter-spacing:0.650px;color:#0d0d0d;">159</span>
<span class="tx" id="t22" style="left:1512.00px;top:579.40px;font-size:20.5px;line-height:26px;letter-spacing:-0.506px;color:#0d0d0d;">Team : 15%</span>
<span class="tx" id="t23" style="left:1694.90px;top:507.75px;font-size:24.5px;line-height:31px;letter-spacing:0.642px;color:#0d0d0d;font-weight:700;">INR 1,225,990</span>
<span class="tx" id="t24" style="left:1872.80px;top:510.96px;font-size:20.5px;line-height:26px;letter-spacing:0.393px;color:#8a8a8a;font-weight:700;">(Allocated)</span>
<span class="tx" id="t25" style="left:1694.00px;top:569.75px;font-size:24.5px;line-height:31px;letter-spacing:0.581px;color:#0d0d0d;">INR 25,990</span>
<span class="tx" id="t26" style="left:1843.60px;top:572.96px;font-size:20.5px;line-height:26px;letter-spacing:0.744px;color:#3b82f6;font-weight:700;">56.3%</span>
<span class="tx" id="t27" style="left:1916.60px;top:572.96px;font-size:20.5px;line-height:26px;letter-spacing:0.510px;color:#9b9b9b;font-weight:700;">(Used)</span>
<span class="tx" id="t28" style="left:2233.20px;top:569.75px;font-size:24.5px;line-height:31px;letter-spacing:0.392px;color:#0d0d0d;">INR 25,990</span>
<span class="tx" id="t29" style="left:2371.60px;top:572.96px;font-size:20.5px;line-height:26px;letter-spacing:1.020px;color:#8fa7c7;font-weight:700;">23.34%</span>
<span class="tx" id="t30" style="left:2459.10px;top:572.96px;font-size:20.5px;line-height:26px;letter-spacing:0.143px;color:#9b9b9b;font-weight:700;">(Available)</span>
<span class="tx" id="t31" style="left:367.40px;top:729.75px;font-size:24.5px;line-height:31px;letter-spacing:0.496px;color:#7a7d84;">Organisation Budget</span>
<span class="tx" id="t32" style="left:1266.70px;top:729.75px;font-size:24.5px;line-height:31px;letter-spacing:0.530px;color:#7a7d84;">Manager Name</span>
<span class="tx" id="t33" style="left:2106.70px;top:729.75px;font-size:24.5px;line-height:31px;letter-spacing:0.621px;color:#7a7d84;">Direct Team Budget</span>
<span class="tx" id="t34" style="left:938.70px;top:841.75px;font-size:24.5px;line-height:31px;letter-spacing:0.600px;color:#0d0d0d;font-weight:700;">INR 1,225,990</span>
<span class="tx" id="t35" style="left:413.20px;top:903.75px;font-size:24.5px;line-height:31px;letter-spacing:0.369px;color:#0d0d0d;">INR 25,990</span>
<span class="tx" id="t36" style="left:562.10px;top:906.96px;font-size:20.5px;line-height:26px;letter-spacing:0.794px;color:#16386e;font-weight:700;">56.3%</span>
<span class="tx" id="t37" style="left:891.20px;top:903.75px;font-size:24.5px;line-height:31px;letter-spacing:0.369px;color:#0d0d0d;">INR 25,990</span>
<span class="tx" id="t38" style="left:1030.30px;top:906.96px;font-size:20.5px;line-height:26px;letter-spacing:0.880px;color:#8fa7c7;font-weight:700;">23.34%</span>
<span class="tx" id="t39" style="left:1233.58px;top:825.75px;font-size:27.5px;line-height:34px;letter-spacing:0.289px;color:#333333;font-weight:700;">Amanda Sheldon’s  Team</span>
<span class="tx" id="t40" style="left:1261.90px;top:876.75px;font-size:19.5px;line-height:24px;letter-spacing:1.000px;color:#0d0d0d;">159</span>
<span class="tx" id="t41" style="left:1206.30px;top:911.75px;font-size:20.5px;line-height:26px;letter-spacing:-0.544px;color:#0d0d0d;">Org : 15%</span>
<span class="tx" id="t42" style="left:1487.90px;top:876.75px;font-size:19.5px;line-height:24px;letter-spacing:1.350px;color:#0d0d0d;">159</span>
<span class="tx" id="t43" style="left:1490.00px;top:909.50px;font-size:20.5px;line-height:26px;letter-spacing:-0.450px;color:#0d0d0d;">Team : 15%</span>
<span class="tx" id="t44" style="left:1694.90px;top:841.75px;font-size:24.5px;line-height:31px;letter-spacing:0.642px;color:#0d0d0d;font-weight:700;">INR 1,225,990</span>
<span class="tx" id="t45" style="left:1694.00px;top:903.75px;font-size:24.5px;line-height:31px;letter-spacing:0.581px;color:#0d0d0d;">INR 25,990</span>
<span class="tx" id="t46" style="left:1843.60px;top:906.96px;font-size:20.5px;line-height:26px;letter-spacing:0.744px;color:#3b82f6;font-weight:700;">56.3%</span>
<span class="tx" id="t47" style="left:2173.20px;top:903.75px;font-size:24.5px;line-height:31px;letter-spacing:0.392px;color:#0d0d0d;">INR 25,990</span>
<span class="tx" id="t48" style="left:2311.60px;top:906.96px;font-size:20.5px;line-height:26px;letter-spacing:1.020px;color:#8fa7c7;font-weight:700;">23.34%</span>
<span class="tx" id="t49" style="left:938.70px;top:1057.75px;font-size:24.5px;line-height:31px;letter-spacing:0.600px;color:#0d0d0d;font-weight:700;">INR 1,225,990</span>
<span class="tx" id="t50" style="left:413.20px;top:1119.75px;font-size:24.5px;line-height:31px;letter-spacing:0.369px;color:#0d0d0d;">INR 25,990</span>
<span class="tx" id="t51" style="left:562.10px;top:1122.96px;font-size:20.5px;line-height:26px;letter-spacing:0.794px;color:#16386e;font-weight:700;">56.3%</span>
<span class="tx" id="t52" style="left:891.20px;top:1119.75px;font-size:24.5px;line-height:31px;letter-spacing:0.369px;color:#0d0d0d;">INR 25,990</span>
<span class="tx" id="t53" style="left:1030.30px;top:1122.96px;font-size:20.5px;line-height:26px;letter-spacing:0.880px;color:#8fa7c7;font-weight:700;">23.34%</span>
<span class="tx" id="t54" style="left:1273.58px;top:1041.75px;font-size:27.5px;line-height:34px;letter-spacing:0.230px;color:#333333;font-weight:700;">Gary Chow’s  Team</span>
<span class="tx" id="t55" style="left:1261.90px;top:1092.75px;font-size:19.5px;line-height:24px;letter-spacing:1.000px;color:#0d0d0d;">159</span>
<span class="tx" id="t56" style="left:1206.30px;top:1127.75px;font-size:20.5px;line-height:26px;letter-spacing:-0.544px;color:#0d0d0d;">Org : 15%</span>
<span class="tx" id="t57" style="left:1487.90px;top:1092.75px;font-size:19.5px;line-height:24px;letter-spacing:1.350px;color:#0d0d0d;">159</span>
<span class="tx" id="t58" style="left:1490.00px;top:1125.50px;font-size:20.5px;line-height:26px;letter-spacing:-0.450px;color:#0d0d0d;">Team : 15%</span>
<span class="tx" id="t59" style="left:1694.22px;top:1057.75px;font-size:24.5px;line-height:31px;letter-spacing:0.642px;color:#0d0d0d;font-weight:700;">INR 1,225,990</span>
<span class="tx" id="t60" style="left:1694.00px;top:1119.75px;font-size:24.5px;line-height:31px;letter-spacing:0.581px;color:#0d0d0d;">INR 25,990</span>
<span class="tx" id="t61" style="left:1843.60px;top:1122.96px;font-size:20.5px;line-height:26px;letter-spacing:0.744px;color:#3b82f6;font-weight:700;">56.3%</span>
<span class="tx" id="t62" style="left:2173.20px;top:1119.75px;font-size:24.5px;line-height:31px;letter-spacing:0.392px;color:#0d0d0d;">INR 25,990</span>
<span class="tx" id="t63" style="left:2311.60px;top:1122.96px;font-size:20.5px;line-height:26px;letter-spacing:1.020px;color:#8fa7c7;font-weight:700;">23.34%</span>
<span class="tx" id="t64" style="left:938.70px;top:1273.75px;font-size:24.5px;line-height:31px;letter-spacing:0.600px;color:#0d0d0d;font-weight:700;">INR 1,225,990</span>
<span class="tx" id="t65" style="left:413.20px;top:1335.75px;font-size:24.5px;line-height:31px;letter-spacing:0.369px;color:#0d0d0d;">INR 25,990</span>
<span class="tx" id="t66" style="left:562.10px;top:1338.96px;font-size:20.5px;line-height:26px;letter-spacing:0.794px;color:#16386e;font-weight:700;">56.3%</span>
<span class="tx" id="t67" style="left:891.20px;top:1335.75px;font-size:24.5px;line-height:31px;letter-spacing:0.369px;color:#0d0d0d;">INR 25,990</span>
<span class="tx" id="t68" style="left:1030.30px;top:1338.96px;font-size:20.5px;line-height:26px;letter-spacing:0.880px;color:#8fa7c7;font-weight:700;">23.34%</span>
<span class="tx" id="t69" style="left:1283.08px;top:1257.75px;font-size:27.5px;line-height:34px;letter-spacing:-0.098px;color:#333333;font-weight:700;">Josh Kaul’s  Team</span>
<span class="tx" id="t70" style="left:1261.90px;top:1308.75px;font-size:19.5px;line-height:24px;letter-spacing:1.000px;color:#0d0d0d;">159</span>
<span class="tx" id="t71" style="left:1206.30px;top:1343.75px;font-size:20.5px;line-height:26px;letter-spacing:-0.544px;color:#0d0d0d;">Org : 15%</span>
<span class="tx" id="t72" style="left:1487.90px;top:1308.75px;font-size:19.5px;line-height:24px;letter-spacing:1.350px;color:#0d0d0d;">159</span>
<span class="tx" id="t73" style="left:1490.00px;top:1341.50px;font-size:20.5px;line-height:26px;letter-spacing:-0.450px;color:#0d0d0d;">Team : 15%</span>
<span class="tx" id="t74" style="left:1694.90px;top:1273.75px;font-size:24.5px;line-height:31px;letter-spacing:0.642px;color:#0d0d0d;font-weight:700;">INR 1,225,990</span>
<span class="tx" id="t75" style="left:1694.00px;top:1335.75px;font-size:24.5px;line-height:31px;letter-spacing:0.581px;color:#0d0d0d;">INR 25,990</span>
<span class="tx" id="t76" style="left:1843.60px;top:1338.96px;font-size:20.5px;line-height:26px;letter-spacing:0.744px;color:#3b82f6;font-weight:700;">56.3%</span>
<span class="tx" id="t77" style="left:2173.20px;top:1335.75px;font-size:24.5px;line-height:31px;letter-spacing:0.392px;color:#0d0d0d;">INR 25,990</span>
<span class="tx" id="t78" style="left:2311.60px;top:1338.96px;font-size:20.5px;line-height:26px;letter-spacing:1.020px;color:#8fa7c7;font-weight:700;">23.34%</span>
</main>
<div id="tip"></div><div id="tip-arrow"></div>
<span class="tx" id="ttip" style="left:1556.20px;top:1069.00px;font-size:20px;line-height:25px;letter-spacing:0.522px;color:#ffffff;">Budget as % of Current Salary</span>
<div id="fade"></div>
</div>
</body>
</html>
